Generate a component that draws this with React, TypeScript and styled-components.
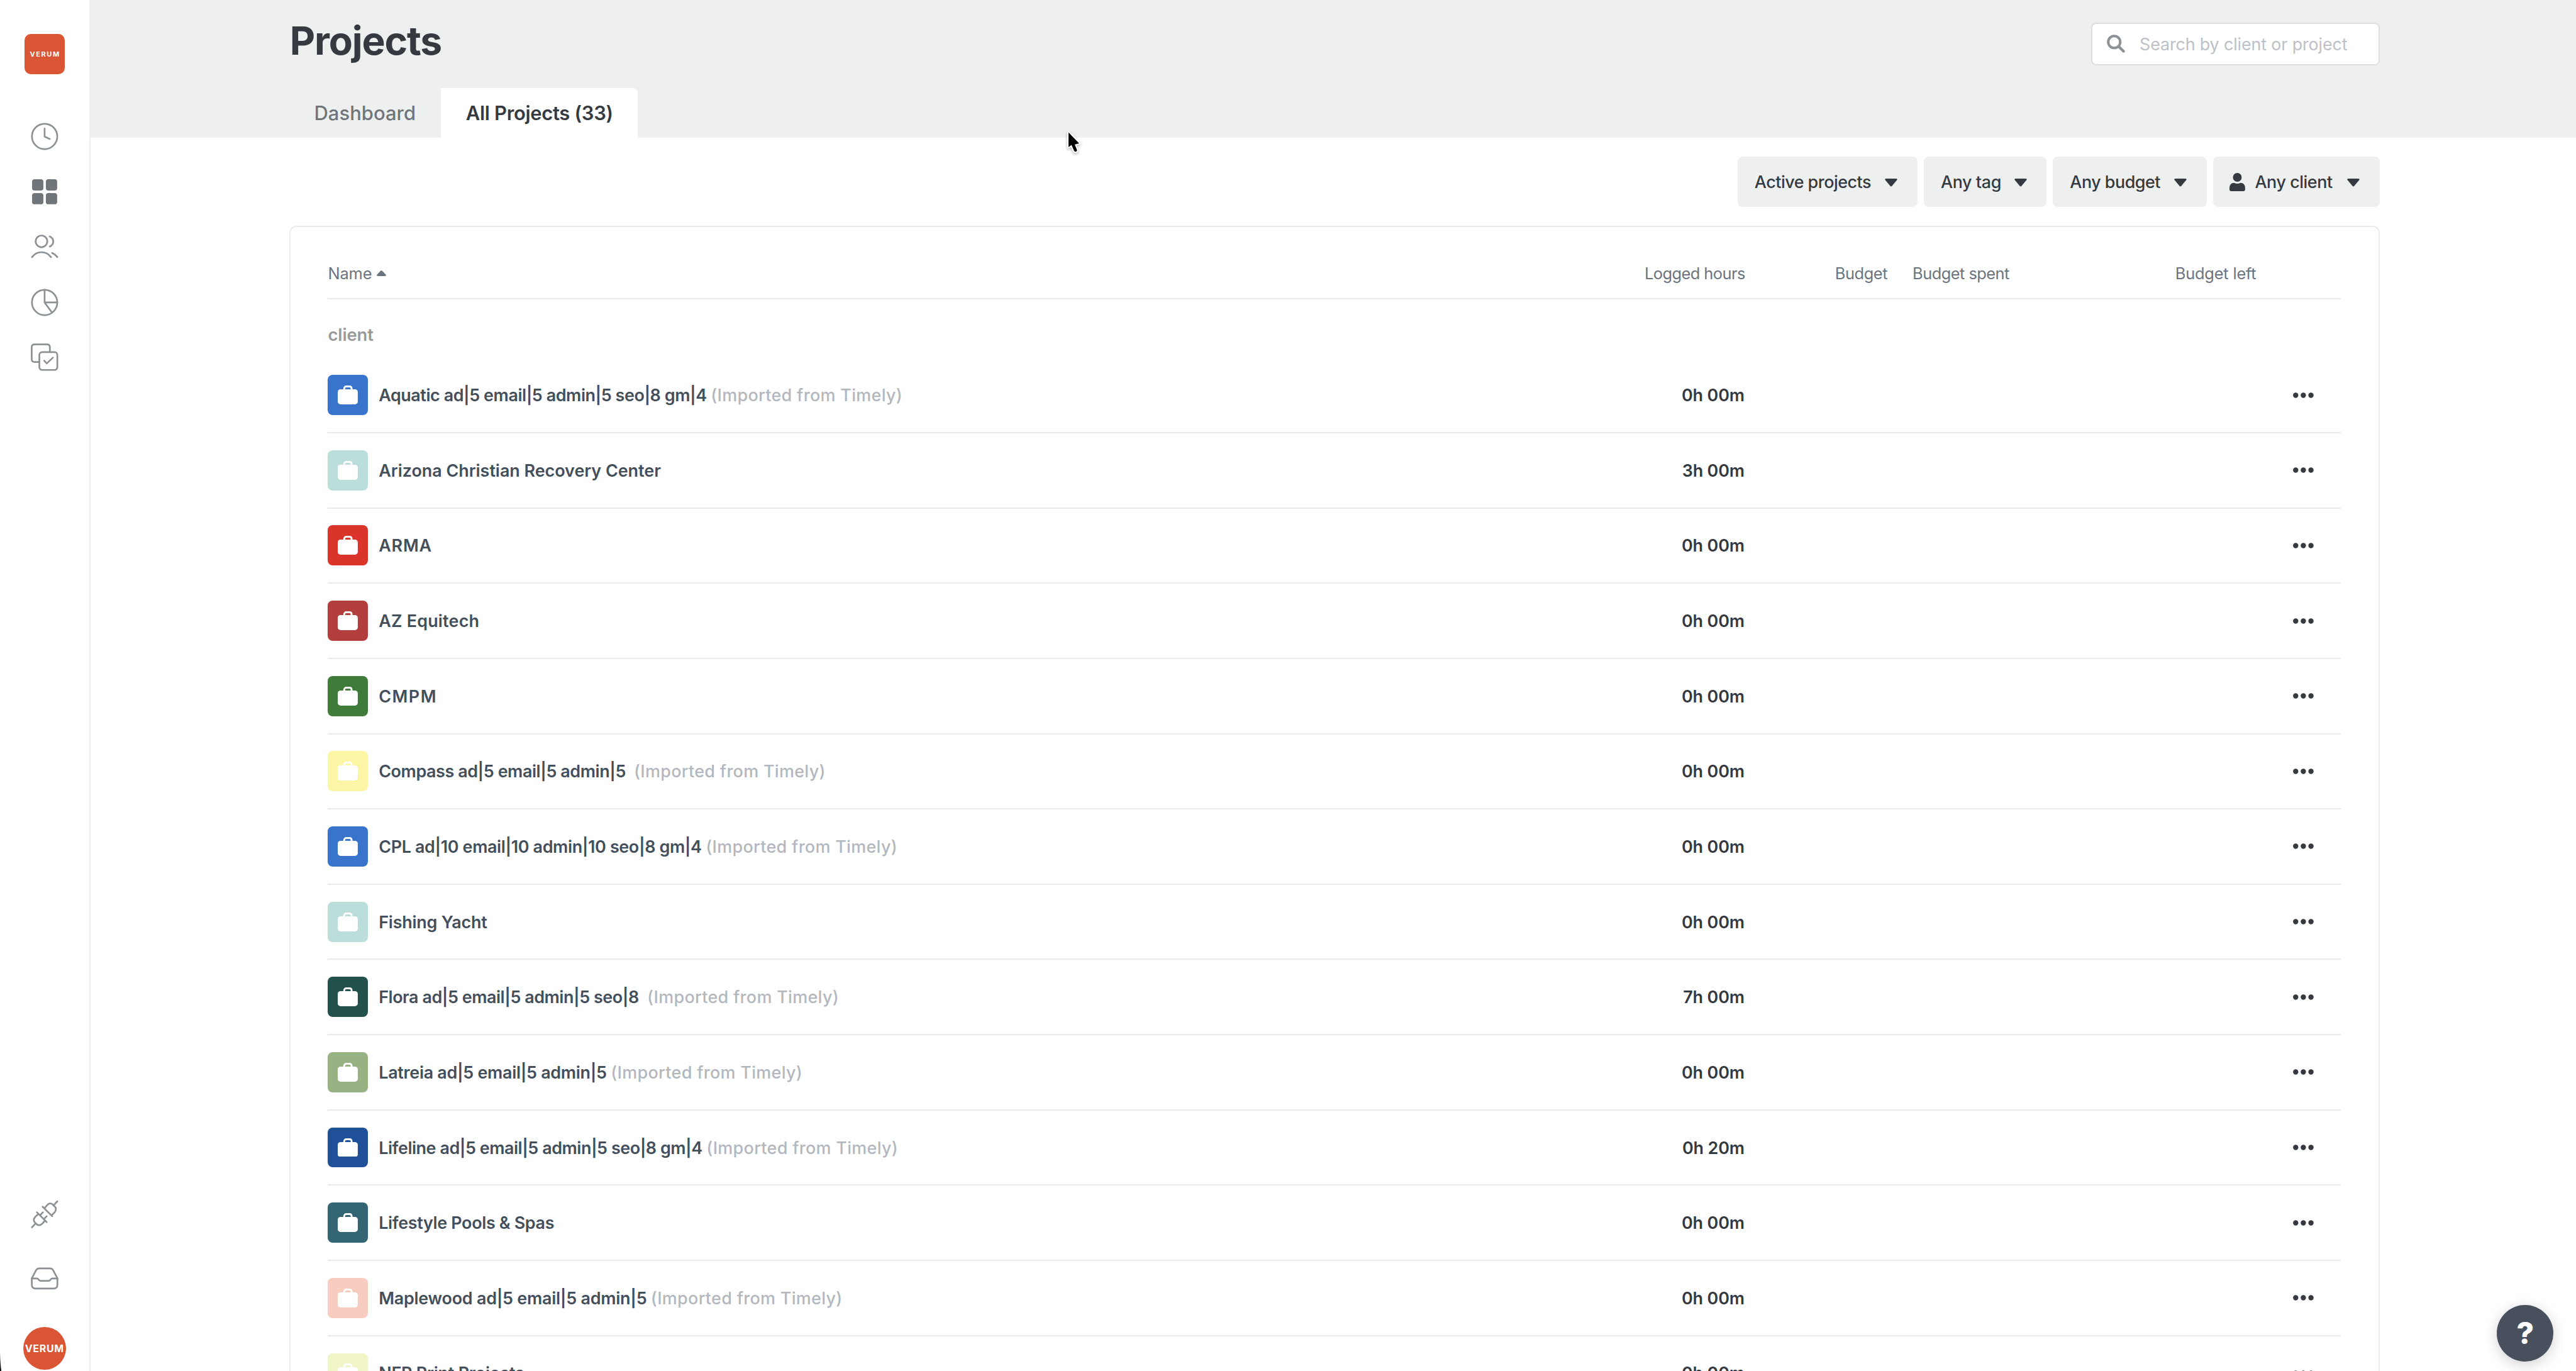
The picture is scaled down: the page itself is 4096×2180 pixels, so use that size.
import React from "react";
import styled, { createGlobalStyle } from "styled-components";

const GlobalStyle = createGlobalStyle`
  *, *::before, *::after { box-sizing: border-box; }
  html { font-size: 9.9708px; }
  body {
    margin: 0;
    overflow: hidden;
    background: #fff;
    color: #343a3f;
    font-family: Inter, "Liberation Sans", sans-serif;
  }
  svg { display: block; flex: none; }
`;

/* ---------- shell ---------- */

const Shell = styled.div`
  position: relative;
  display: flex;
  width: 100vw;
  height: 100vh;
  overflow: hidden;
`;

const Sidebar = styled.aside`
  display: flex;
  flex: none;
  flex-direction: column;
  align-items: center;
  width: 14.4rem;
  padding: 5.4rem 0 0.2rem;
  border-right: 2px solid #eeeeef;
`;

const Logo = styled.div`
  display: flex;
  align-items: center;
  justify-content: center;
  width: 6.4rem;
  height: 6.4rem;
  border-radius: 1rem;
  background: #d95534;
  color: #fff;
  font-size: 1.1rem;
  font-weight: 700;
  letter-spacing: 0.16rem;
  text-indent: 0.16rem;
`;

const Nav = styled.nav`
  display: flex;
  flex-direction: column;
  gap: 4.4rem;
  margin-top: 7.8rem;
`;

const NavFooter = styled.div`
  display: flex;
  flex-direction: column;
  align-items: center;
  gap: 5.8rem;
  margin-top: auto;
`;

const Avatar = styled(Logo)`
  width: 6.8rem;
  height: 6.8rem;
  margin-top: -0.2rem;
  border-radius: 50%;
  font-size: 1.6rem;
  letter-spacing: 0.07rem;
  text-indent: 0;
`;

const NavIcon = styled.svg`
  width: 4.4rem;
  height: 4.4rem;
  overflow: visible;
  fill: none;
  stroke: #8c9195;
  stroke-width: 2.7;
  stroke-linecap: round;
  stroke-linejoin: round;
`;

const Main = styled.main`
  flex: 1;
  min-width: 0;
`;

/* ---------- header ---------- */

const Header = styled.header`
  display: flex;
  flex-direction: column;
  justify-content: space-between;
  height: 22rem;
  margin-left: -2px;
  padding: 0 31.3rem 0 31.9rem;
  background: #eef0ef;
`;

const HeaderTop = styled.div`
  display: flex;
  align-items: flex-start;
  justify-content: space-between;
`;

const Title = styled.h1`
  margin: 0 0 0 0.1rem;
  font-size: 6.25rem;
  font-weight: 700;
  line-height: 13.1rem;
  letter-spacing: -0.11rem;
`;

const SearchBox = styled.label`
  display: flex;
  align-items: center;
  gap: 2.3rem;
  width: 46rem;
  height: 6.8rem;
  margin-top: 3.6rem;
  padding-left: 2.3rem;
  border: 2px solid #dedfdf;
  border-radius: 0.8rem;
  background: #fff;
  color: #bcc1c7;
  font-size: 2.7rem;
  letter-spacing: -0.015rem;
  white-space: nowrap;
`;

const SearchIcon = styled.svg`
  width: 2.9rem;
  height: 2.9rem;
  fill: none;
  stroke: #8c9195;
`;

const Tabs = styled.div`
  display: flex;
  height: 8rem;
`;

const Tab = styled.div<{ $active?: boolean; $width: number; $track: number }>`
  display: flex;
  align-items: center;
  width: ${(p) => p.$width}rem;
  padding-left: 4rem;
  border-radius: 0 0.8rem 0 0;
  background: ${(p) => (p.$active ? "#fff" : "transparent")};
  color: ${(p) => (p.$active ? "#343a3f" : "#707579")};
  font-size: 3.1rem;
  font-weight: ${(p) => (p.$active ? 600 : 500)};
  letter-spacing: ${(p) => p.$track}rem;
  white-space: nowrap;
`;

/* ---------- filters ---------- */

const Content = styled.section`
  padding: 0 31.3rem 0 31.7rem;
`;

const Filters = styled.div`
  display: flex;
  justify-content: flex-end;
  gap: 1rem;
  padding: 3rem 0;
`;

const Filter = styled.div<{ $width: number; $track: number }>`
  display: flex;
  align-items: center;
  width: ${(p) => p.$width}rem;
  height: 8rem;
  padding: 0 3.2rem 0 2.7rem;
  border-radius: 0.8rem;
  background: #eef0ef;
  font-size: 2.7rem;
  font-weight: 500;
  letter-spacing: ${(p) => p.$track}rem;
  white-space: nowrap;
`;

const Caret = styled.svg`
  width: 2rem;
  height: 1.3rem;
  margin: 0.2rem 0 0 auto;
  fill: #343a3f;
`;

const PersonIcon = styled.svg`
  width: 2.5rem;
  height: 2.9rem;
  margin: 0 1.6rem 0 -0.1rem;
  fill: #343a3f;
`;

/* ---------- table ---------- */

const Card = styled.div`
  height: 240rem;
  padding: 0 6rem;
  border: 2px solid #ebeced;
  border-radius: 1.1rem;
`;

const TableLine = styled.div`
  display: grid;
  grid-template-columns: 200rem 26rem 22.7rem 39rem 19.8rem 1fr;
  align-items: center;
  border-bottom: 2px solid #ebebeb;
  white-space: nowrap;
`;

const HeadLine = styled(TableLine)`
  height: 11.5rem;
  padding-top: 3.4rem;
  color: #6b747e;
  font-size: 2.55rem;
`;

const HeadCell = styled.div<{ $right?: boolean; $indent?: number; $track: number }>`
  display: flex;
  align-items: center;
  justify-content: ${(p) => (p.$right ? "flex-end" : "flex-start")};
  padding-left: ${(p) => p.$indent ?? 0}rem;
  letter-spacing: ${(p) => p.$track}rem;
`;

const SortArrow = styled.svg`
  width: 1.5rem;
  height: 0.9rem;
  margin-left: 0.8rem;
  fill: #6b747e;
`;

const GroupLabel = styled.div`
  display: flex;
  align-items: center;
  height: 9.4rem;
  padding-top: 2rem;
  color: #999;
  font-size: 2.75rem;
  font-weight: 600;
  letter-spacing: -0.01rem;
`;

const ProjectLine = styled(TableLine)`
  height: 12rem;
  font-size: 2.7rem;
  font-weight: 600;
`;

const NameCell = styled.div`
  display: flex;
  align-items: center;
`;

const Badge = styled.div<{ $color: string }>`
  display: flex;
  justify-content: center;
  width: 6.4rem;
  height: 6.4rem;
  margin-right: 1.7rem;
  padding-top: 1.7rem;
  border-radius: 0.8rem;
  background: ${(p) => p.$color};
`;

const Briefcase = styled.svg`
  width: 3.2rem;
  height: 3rem;
`;

const ProjectName = styled.span<{ $track: number }>`
  color: #444f5c;
  letter-spacing: ${(p) => p.$track}rem;
`;

const Origin = styled.span<{ $gap: number }>`
  margin-left: ${(p) => p.$gap}rem;
  color: #b3b7be;
  font-weight: 500;
  letter-spacing: 0.034rem;
`;

const Hours = styled.div`
  justify-self: end;
  padding-right: 0.1rem;
  letter-spacing: -0.015rem;
`;

const MenuDots = styled.svg`
  grid-column: 6;
  width: 3.3rem;
  height: 0.9rem;
  margin-left: 5.9rem;
  fill: #343a3f;
`;

/* ---------- overlays ---------- */

const HelpButton = styled.div`
  position: absolute;
  right: 3.6rem;
  bottom: 1.5rem;
  display: flex;
  align-items: center;
  justify-content: center;
  width: 9rem;
  height: 9rem;
  border-radius: 50%;
  background: #47505c;
  box-shadow: 0 0.5rem 2.2rem rgba(0, 0, 0, 0.18);
  color: #fff;
  font-size: 4.8rem;
  font-weight: 800;
`;

const Pointer = styled.svg`
  position: absolute;
  left: 170rem;
  top: 20.8rem;
  width: 2.6rem;
  height: 3.8rem;
  overflow: visible;
  filter: drop-shadow(0 2px 2px rgba(0, 0, 0, 0.3));
`;

const WindowCorner = styled.svg`
  position: absolute;
  left: 0;
  bottom: 0;
  width: 0.3rem;
  height: 3rem;
`;

type Project = {
  name: string;
  color: string;
  hours: string;
  track: number;
  originGap?: number;
};

const projects: Project[] = [
  { name: "Aquatic ad|5 email|5 admin|5 seo|8 gm|4", color: "#3873cc", hours: "0h 00m", track: -0.043, originGap: 0.65 },
  { name: "Arizona Christian Recovery Center", color: "#bbdeda", hours: "3h 00m", track: -0.002 },
  { name: "ARMA", color: "#db342b", hours: "0h 00m", track: 0.08 },
  { name: "AZ Equitech", color: "#b23e3e", hours: "0h 00m", track: 0.02 },
  { name: "CMPM", color: "#3f7c3a", hours: "0h 00m", track: 0.15 },
  { name: "Compass ad|5 email|5 admin|5", color: "#fcf5a6", hours: "0h 00m", track: -0.042, originGap: 1.3 },
  { name: "CPL ad|10 email|10 admin|10 seo|8 gm|4", color: "#3873cc", hours: "0h 00m", track: -0.036, originGap: 0.65 },
  { name: "Fishing Yacht", color: "#bbdeda", hours: "0h 00m", track: -0.02 },
  { name: "Flora ad|5 email|5 admin|5 seo|8", color: "#23514c", hours: "7h 00m", track: -0.045, originGap: 1.35 },
  { name: "Latreia ad|5 email|5 admin|5", color: "#98b284", hours: "0h 00m", track: -0.029, originGap: 0.65 },
  { name: "Lifeline ad|5 email|5 admin|5 seo|8 gm|4", color: "#205198", hours: "0h 20m", track: -0.045, originGap: 0.65 },
  { name: "Lifestyle Pools & Spas", color: "#336672", hours: "0h 00m", track: -0.034 },
  { name: "Maplewood ad|5 email|5 admin|5", color: "#f7cdc0", hours: "0h 00m", track: -0.024, originGap: 0.65 },
  { name: "NFP Print Projects", color: "#f0f4c7", hours: "0h 00m", track: -0.02 },
];

const CaretDown = () => (
  <Caret viewBox="0 0 20 13">
    <path d="M1.6 0H18.4Q20.6 .4 19.3 2.3L11.4 11.9Q10 13.4 8.6 11.9L.7 2.3Q-.6 .4 1.6 0Z" />
  </Caret>
);

const ProjectRow = ({ project }: { project: Project }) => (
  <ProjectLine>
    <NameCell>
      <Badge $color={project.color}>
        <Briefcase viewBox="0 0 32 30">
          <path d="M10.3 7V5Q10.3 1.5 13.8 1.5H18.7Q22.2 1.5 22.2 5V7" fill="none" stroke="#fff" strokeWidth="2.8" />
          <rect y="6" width="32" height="24" rx="4.5" fill="#fff" />
        </Briefcase>
      </Badge>
      <ProjectName $track={project.track}>{project.name}</ProjectName>
      {project.originGap !== undefined && <Origin $gap={project.originGap}>(Imported from Timely)</Origin>}
    </NameCell>
    <Hours>{project.hours}</Hours>
    <MenuDots viewBox="0 0 33 9">
      <circle cx="4.3" cy="4.5" r="4.2" />
      <circle cx="16.5" cy="4.5" r="4.2" />
      <circle cx="28.7" cy="4.5" r="4.2" />
    </MenuDots>
  </ProjectLine>
);

export default function App() {
  return (
    <Shell>
      <GlobalStyle />
      <Sidebar>
        <Logo>VERUM</Logo>
        <Nav>
          <NavIcon viewBox="0 0 44 44">
            <circle cx="22" cy="22" r="20.2" />
            <path d="M22 9.5V22.3L30.3 26" />
          </NavIcon>
          <NavIcon viewBox="0 0 44 44">
            <g fill="#707579" stroke="none">
              <rect x="2" y="2" width="18" height="18" rx="4" />
              <rect x="24" y="2" width="18" height="18" rx="4" />
              <rect x="2" y="24" width="18" height="18" rx="4" />
              <rect x="24" y="24" width="18" height="18" rx="4" />
            </g>
          </NavIcon>
          <NavIcon viewBox="0 0 44 44">
            <circle cx="17" cy="12.8" r="9.3" />
            <path d="M30.2 5Q35.8 7.6 35.8 13T30.2 21" />
            <path d="M1.8 38C10 27.5 24 27.5 32.3 38" />
            <path d="M34 31.3Q38.8 33.3 42.3 38" />
          </NavIcon>
          <NavIcon viewBox="0 0 44 44">
            <circle cx="22" cy="22" r="20.2" />
            <path d="M22 1.8V22H42.2M22 22L33.4 37.6" />
          </NavIcon>
          <NavIcon viewBox="0 0 44 44">
            <path d="M30.4 13.7V6.2Q30.4 1.7 25.9 1.7H5.9Q1.4 1.7 1.4 6.2V25.2Q1.4 29.7 5.9 29.7H13.4" />
            <rect x="13.6" y="14" width="28.7" height="28.4" rx="4.5" />
            <path d="M21.3 27.5L25.5 32L35.3 22.7" />
          </NavIcon>
        </Nav>
        <NavFooter>
          <NavIcon viewBox="0 0 44 44">
            <path d="M42.3 1.3L36.2 7.6M18.7 9.7L34.3 25" />
            <path d="M21.9 12.2L25.5 8C29.2 3.2 33 3.6 36.2 7.6C40.8 10.8 41 15.2 38 18.8L33.1 23.5" />
            <path d="M1.7 42.7L7.8 36.3M9.7 18.7L25.3 34.3" />
            <path d="M12.2 21.3L7.5 25.6C3.6 29.5 3.8 33 7.8 36.3C11.2 40.4 15.2 40.2 18.6 36.5L22.8 31.8" />
            <path d="M19.3 18.7L15 23M25.3 25L21 29.3" />
          </NavIcon>
          <NavIcon viewBox="0 0 44 44">
            <path d="M1.6 21.8L8.3 8.9Q9.9 5.8 13.3 5.8H30.7Q34.1 5.8 35.7 8.9L42.4 21.8V32Q42.4 38 36.4 38H7.6Q1.6 38 1.6 32Z" />
            <path d="M1.6 22H9.6Q11.4 22 12.6 24Q13.6 25.8 15.6 25.8H28.4Q30.4 25.8 31.4 24Q32.6 22 34.4 22H42.4" />
          </NavIcon>
          <Avatar>VERUM</Avatar>
        </NavFooter>
      </Sidebar>

      <Main>
        <Header>
          <HeaderTop>
            <Title>Projects</Title>
            <SearchBox>
              <SearchIcon viewBox="0 0 29 29">
                <circle cx="11.8" cy="11.8" r="9.6" strokeWidth="4" />
                <path d="M19 19L26.6 26.6" strokeWidth="4.4" strokeLinecap="round" />
              </SearchIcon>
              Search by client or project
            </SearchBox>
          </HeaderTop>
          <Tabs>
            <Tab $width={24.2} $track={0.006}>Dashboard</Tab>
            <Tab $width={31.4} $track={-0.029} $active>All Projects (33)</Tab>
          </Tabs>
        </Header>

        <Content>
          <Filters>
            <Filter $width={28.7} $track={-0.05}>Active projects<CaretDown /></Filter>
            <Filter $width={19.6} $track={-0.04}>Any tag<CaretDown /></Filter>
            <Filter $width={24.5} $track={-0.05}>Any budget<CaretDown /></Filter>
            <Filter $width={26.6} $track={-0.046}>
              <PersonIcon viewBox="0 0 25 29">
                <circle cx="12.5" cy="7" r="7" />
                <path d="M0 24.5Q0 16 7.5 15.8Q12.5 18.2 17.5 15.8Q25 16 25 24.5V26Q25 29 22 29H3Q0 29 0 26Z" />
              </PersonIcon>
              Any client
              <CaretDown />
            </Filter>
          </Filters>

          <Card>
            <HeadLine>
              <HeadCell $track={-0.015}>
                Name
                <SortArrow viewBox="0 0 15 9">
                  <path d="M6.4 .6Q7.5 -.4 8.6 .6L14.4 6.6Q15.6 8.6 13.6 9H1.4Q-.6 8.6 .6 6.6Z" />
                </SortArrow>
              </HeadCell>
              <HeadCell $right $track={-0.055}>Logged hours</HeadCell>
              <HeadCell $right $track={-0.04}>Budget</HeadCell>
              <HeadCell $indent={4} $track={-0.053}>Budget spent</HeadCell>
              <HeadCell $right $track={-0.02}>Budget left</HeadCell>
            </HeadLine>
            <GroupLabel>client</GroupLabel>
            {projects.map((project) => (
              <ProjectRow key={project.name} project={project} />
            ))}
          </Card>
        </Content>
      </Main>

      <HelpButton>?</HelpButton>
      <Pointer viewBox="0 0 26 38">
        <path d="M4 3.5V27L8.8 23.6L13 33Q14.6 35.4 17 33.6Q18 32.4 17.4 31L14 22.8L21 21Z" fill="#000" stroke="#fff" strokeWidth="4" strokeLinejoin="round" paintOrder="stroke" />
      </Pointer>
      <WindowCorner viewBox="0 0 3 30">
        <path d="M0 0Q.3 18 2.2 30H0Z" fill="#111" />
      </WindowCorner>
    </Shell>
  );
}
